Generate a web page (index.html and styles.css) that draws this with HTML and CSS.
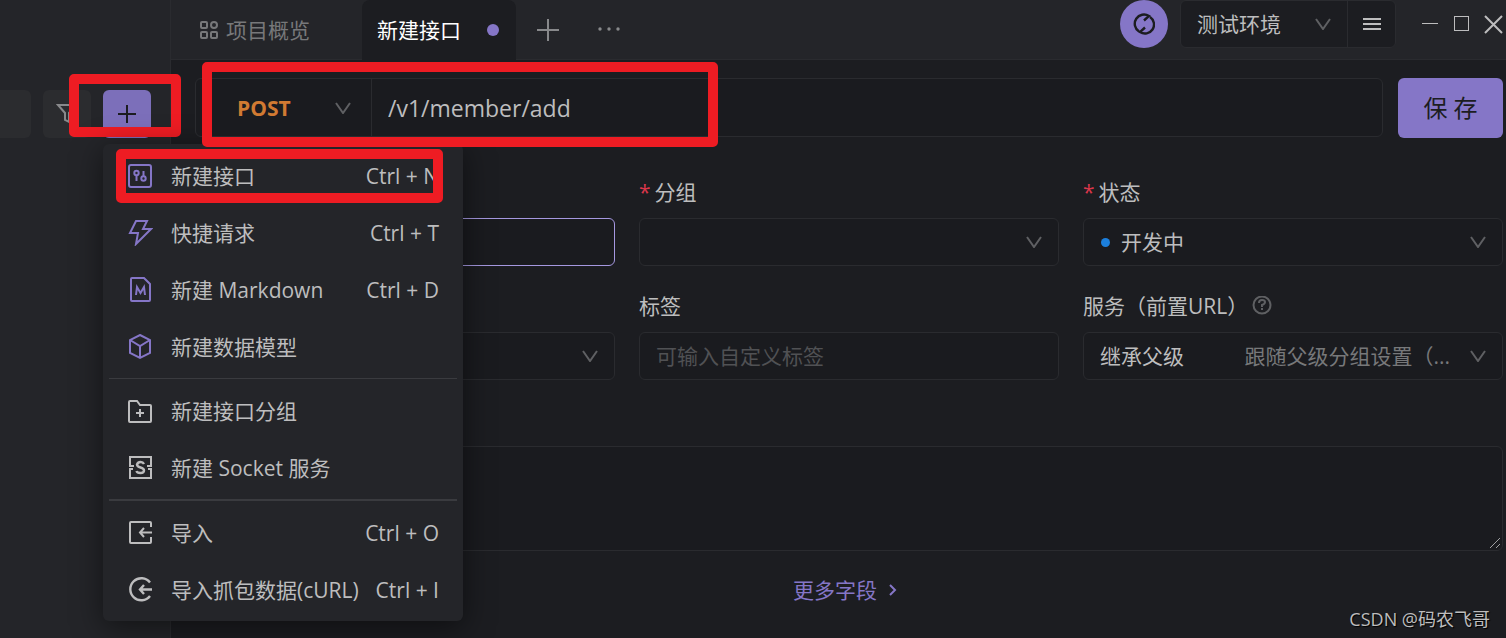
FILE: index.html
```
<!DOCTYPE html>
<html lang="zh-CN">
  <head>
    <meta charset="UTF-8">
    <meta name="viewport" content="width=device-width, initial-scale=1.0">
    <title>新建接口</title>
    <link rel="stylesheet" href="styles.css">
  </head>
  <body>
    <!-- shared icons -->
    <svg class="sprite" aria-hidden="true">
      <symbol id="chevron" viewBox="0 0 16 12"><path d="M1 1 L8 11 L15 1" /></symbol>
    </svg>

    <div class="app">
      <aside class="sidebar">
        <div class="tools">
          <input class="search" type="text" aria-label="搜索">
          <button class="tool" type="button" aria-label="筛选">
            <svg class="icon" width="22" height="22" viewBox="0 0 22 22"><path d="M2 2h18l-7 8v9l-4-2v-7z" /></svg>
          </button>
          <button class="tool add" type="button" aria-label="新建">
            <svg class="icon" width="20" height="20" viewBox="0 0 20 20"><path d="M10 1v18M1 10h18" /></svg>
          </button>
          <div class="mark markAdd"></div>
        </div>

        <!-- dropdown of the add button -->
        <div class="menu">
          <button class="item" type="button">
            <svg class="icon purple" width="26" height="26" viewBox="0 0 26 26"><rect x="2" y="2" width="22" height="22" rx="2" /><circle cx="9.5" cy="10" r="2.2" /><path d="M9.5 12v6M16.5 8v6" /><circle cx="16.5" cy="15.5" r="2.2" /></svg>
            <span>新建接口</span><kbd>Ctrl + N</kbd>
          </button>
          <button class="item" type="button">
            <svg class="icon purple" width="26" height="26" viewBox="0 0 26 26"><path d="M9 1h11l-4 8h8L9 24l2-11H3z" /></svg>
            <span>快捷请求</span><kbd>Ctrl + T</kbd>
          </button>
          <button class="item" type="button">
            <svg class="icon purple" width="26" height="26" viewBox="0 0 26 26"><path d="M5 1h12l6 6v16q0 1-1 1H5q-1 0-1-1V2q0-1 1-1z" /><path d="M9 18L10 10l3.500 6L17 10l1 8" /></svg>
            <span>新建 Markdown</span><kbd>Ctrl + D</kbd>
          </button>
          <button class="item" type="button">
            <svg class="icon purple" width="26" height="26" viewBox="0 0 26 26"><path d="M13 1l10 5v13l-10 5-10-5V6zM3 6l10 6 10-6M13 12v12" /></svg>
            <span>新建数据模型</span>
          </button>
          <hr>
          <button class="item" type="button">
            <svg class="icon" width="26" height="26" viewBox="0 0 26 26"><path d="M3 3h7l3 4h10q1 0 1 1v15q0 1-1 1H3q-1 0-1-1V4q0-1 1-1zM13 11v8M9 15h8" /></svg>
            <span>新建接口分组</span>
          </button>
          <button class="item" type="button">
            <svg class="icon" width="26" height="26" viewBox="0 0 26 26"><path d="M3 11V2h21v9M3 14v9h21v-9M2 11h5M2 14h4M20 11h5M21 14h4" /><path class="letter" d="M17 9q-1-2-3.500-2T10 9.500q0 2 3.500 3t3.500 3q0 2.500-3.500 2.500T9.500 16" /></svg>
            <span>新建 Socket 服务</span>
          </button>
          <hr class="thick">
          <button class="item" type="button">
            <svg class="icon" width="26" height="26" viewBox="0 0 26 26"><path d="M24 7V3q0-1-1-1H4Q3 2 3 3v19q0 1 1 1h19q1 0 1-1v-5M25 12.500H13M17 8l-4 4.500 4 4.500" /></svg>
            <span>导入</span><kbd>Ctrl + O</kbd>
          </button>
          <button class="item" type="button">
            <svg class="icon letter" width="26" height="26" viewBox="0 0 26 26"><path d="M23 5.500A11 11 0 1 0 23 19M25 12.500H13M17 8l-4 4.500 4 4.500" /></svg>
            <span>导入抓包数据(cURL)</span><kbd>Ctrl + I</kbd>
          </button>
          <div class="mark markItem"></div>
        </div>
      </aside>

      <main class="main">
        <header class="topbar">
          <nav class="tabs">
            <button class="tab" type="button">
              <svg class="icon" width="20" height="20" viewBox="0 0 20 20"><rect x="2" y="2" width="6" height="6" rx="1" /><circle cx="15" cy="5" r="3" /><rect x="2" y="12" width="6" height="6" rx="1" /><rect x="12" y="12" width="6" height="6" rx="1" /></svg>
              项目概览
            </button>
            <button class="tab active" type="button">新建接口<span class="dot"></span></button>
            <button class="iconBtn" type="button" aria-label="新标签">
              <svg class="icon" width="24" height="22" viewBox="0 0 24 22"><path d="M12 0v22M1 11h22" /></svg>
            </button>
            <button class="iconBtn more" type="button" aria-label="更多">
              <svg width="22" height="6" viewBox="0 0 22 6" fill="currentColor"><circle cx="2" cy="2" r="1.700" /><circle cx="11" cy="2" r="1.700" /><circle cx="20" cy="2" r="1.700" /></svg>
            </button>
          </nav>
          <div class="actions">
            <button class="sync" type="button" aria-label="同步">
              <svg class="icon letter" width="22" height="22" viewBox="0 0 22 22"><path d="M6 18.500A9 9 0 0 1 16 3L11 7.500M17 4A9 9 0 0 1 7 19L12 14.500" /></svg>
            </button>
            <div class="env">
              <div class="select">
                <select aria-label="环境"><option>测试环境</option></select>
                <svg class="chevron"><use href="#chevron" /></svg>
              </div>
              <button class="envMenu" type="button" aria-label="环境管理">
                <svg class="icon" width="18" height="14" viewBox="0 0 18 14"><path d="M0 2h18M0 7h18M0 12h18" /></svg>
              </button>
            </div>
            <div class="winBtns">
              <button type="button" aria-label="最小化"><svg width="16" height="20" viewBox="0 0 16 20"><path class="thin" d="M0 9.500h16" /></svg></button>
              <button type="button" aria-label="最大化"><svg width="16" height="20" viewBox="0 0 16 20"><rect class="thin" x="1.500" y="2.500" width="14" height="14" /></svg></button>
              <button type="button" aria-label="关闭"><svg width="20" height="20" viewBox="0 0 20 20"><path d="M1 2l17 17M18 2L1 19" /></svg></button>
            </div>
          </div>
        </header>

        <form class="form">
          <div class="urlRow">
            <div class="urlBox">
              <div class="select method">
                <select aria-label="请求方法"><option>POST</option></select>
                <svg class="chevron"><use href="#chevron" /></svg>
              </div>
              <input type="text" aria-label="接口地址" value="/v1/member/add">
            </div>
            <button class="save" type="button">保 存</button>
            <div class="mark markUrl"></div>
          </div>

          <div class="fields">
            <div class="field">
              <input class="control focused" type="text" aria-label="接口名称">
            </div>
            <div class="field">
              <label for="group"><span class="required">*</span>分组</label>
              <div class="select control">
                <select id="group"><option></option></select>
                <svg class="chevron"><use href="#chevron" /></svg>
              </div>
            </div>
            <div class="field">
              <label for="status"><span class="required">*</span>状态</label>
              <div class="select control status">
                <span class="statusDot"></span>
                <select id="status"><option>开发中</option></select>
                <svg class="chevron"><use href="#chevron" /></svg>
              </div>
            </div>
            <div class="field">
              <div class="select control">
                <select aria-label="责任人"><option></option></select>
                <svg class="chevron"><use href="#chevron" /></svg>
              </div>
            </div>
            <div class="field">
              <label for="tags">标签</label>
              <input class="control" id="tags" type="text" placeholder="可输入自定义标签">
            </div>
            <div class="field">
              <label for="service">服务（前置URL）
                <svg class="help" width="20" height="20" viewBox="0 0 20 20"><circle cx="10" cy="9" r="8.500" /><path d="M7 7q0-3 3-3t3 2q0 2-3 3v2M10 12v2" /></svg>
              </label>
              <div class="select control">
                <select id="service"><option>继承父级</option></select>
                <span class="hint">跟随父级分组设置（...</span>
                <svg class="chevron"><use href="#chevron" /></svg>
              </div>
            </div>
          </div>

          <div class="descBox">
            <textarea class="desc" aria-label="说明"></textarea>
            <svg class="grip" width="12" height="12" viewBox="0 0 12 12"><path d="M1 11L11 1M7 11l4-4" /></svg>
          </div>

          <a class="moreFields" href="#">更多字段
            <svg class="icon" width="8" height="12" viewBox="0 0 8 12"><path d="M1 1l5 5-5 5" /></svg>
          </a>
        </form>
      </main>
    </div>
    <div class="watermark">CSDN @码农飞哥</div>
  </body>
</html>
```
FILE: styles.css
```
:root {
    --bar: #242529;
    --bg: #1c1d21;
    --input: #1a1b1f;
    --line: #2a2b2f;
    --text: #bdbdbe;
    --muted: #77787a;
    --purple: #8576c7;
    --red: #ee1c23;
}
* {
    box-sizing: border-box;
}
body {
    margin: 0;
    background: var(--bg);
    color: var(--text);
    font-family: "Open Sans", "Noto Sans CJK SC", sans-serif;
    font-size: 21px;
    line-height: 30px;
}
button, input, select, textarea, kbd {
    font: inherit;
    color: inherit;
}
button {
    padding: 0;
    border: 0;
    background: none;
}
input, select, textarea {
    min-width: 0;
    border: 0;
    outline: 0;
    background: none;
}
svg {
    display: block;
    flex: none;
}
.sprite {
    position: absolute;
    width: 0;
    height: 0;
}
.icon {
    fill: none;
    stroke: currentColor;
    stroke-width: 2;
}
.letter {
    stroke-width: 2.4;
}
.purple {
    color: var(--purple);
}
.app {
    display: flex;
    min-height: 100vh;
}

/* sidebar */
.sidebar {
    position: relative;
    z-index: 2;
    flex: none;
    width: 171px;
    background: var(--bar);
    border-right: 1px solid var(--line);
}
.tools {
    position: relative;
    display: flex;
    gap: 12px;
    padding-top: 90px;
}
.search {
    width: 31px;
    height: 48px;
    background: #2b2c2f;
    border-radius: 0 6px 6px 0;
}
.tool {
    display: flex;
    align-items: center;
    justify-content: center;
    width: 48px;
    height: 48px;
    background: #2b2c2f;
    border-radius: 6px;
    color: #88898b;
}
.add {
    background: #7c6fba;
    color: #1c1d21;
}

/* red frames */
.mark {
    position: absolute;
    border: 10px solid var(--red);
    border-radius: 5px;
    pointer-events: none;
}
.markAdd {
    top: 74px;
    left: 69px;
    width: 112px;
    height: 63px;
}
.markUrl {
    top: -16px;
    left: 7px;
    width: 516px;
    height: 85px;
}
.markItem {
    top: 5px;
    left: 13px;
    width: 327px;
    height: 54px;
}

/* menu */
.menu {
    position: absolute;
    top: 144px;
    left: 103px;
    width: 360px;
    padding: 3px 6px;
    background: var(--bar);
    border-radius: 6px;
    box-shadow: 0 6px 30px rgba(0, 0, 0, 0.5);
}
.item {
    display: flex;
    align-items: center;
    width: 100%;
    height: 57px;
    padding: 0 18px;
    text-align: left;
    white-space: nowrap;
}
.item span {
    margin-left: 18px;
}
.item kbd {
    margin-left: auto;
}
.menu hr {
    height: 1px;
    margin: 3px 0;
    border: 0;
    background: #3a3b3f;
}
.menu .thick {
    height: 2px;
}

/* top bar */
.main {
    display: flex;
    flex-direction: column;
    flex: 1;
    min-width: 0;
}
.topbar {
    display: flex;
    justify-content: space-between;
    height: 60px;
    background: var(--bar);
    box-shadow: inset 0 -1px var(--line);
}
.tabs, .actions, .env, .winBtns {
    display: flex;
}
.tab {
    display: flex;
    align-items: center;
    gap: 7px;
    width: 191px;
    padding-left: 28px;
    color: var(--muted);
}
.active {
    gap: 26px;
    width: 154px;
    padding-left: 15px;
    background: var(--bg);
    border-radius: 8px 8px 0 0;
    color: #fff;
}
.dot {
    width: 12px;
    height: 12px;
    border-radius: 50%;
    background: var(--purple);
}
.iconBtn {
    margin-left: 20px;
    color: #88898b;
}
.more {
    margin-left: 38px;
}
.sync {
    display: flex;
    align-items: center;
    justify-content: center;
    width: 48px;
    height: 48px;
    margin-right: 12px;
    border-radius: 50%;
    background: var(--purple);
    color: #1c1d21;
}
.env {
    width: 216px;
    height: 48px;
    background: var(--bg);
    border: 1px solid var(--line);
    border-radius: 6px;
}
.envMenu {
    display: flex;
    align-items: center;
    justify-content: center;
    width: 48px;
    border-left: 1px solid var(--line);
}
.winBtns {
    align-items: center;
    gap: 15px;
    height: 48px;
    margin: 0 2px 0 26px;
}
.winBtns svg {
    fill: none;
    stroke: #bdbdbe;
    stroke-width: 2;
}
.winBtns .thin {
    stroke-width: 1;
}

/* selects: text, hint and chevron share one cell */
.select {
    display: grid;
    flex: 1;
    align-items: center;
}
.select > * {
    grid-area: 1 / 1;
}
.select select {
    width: 100%;
    height: 100%;
    padding: 0 16px;
    appearance: none;
}
.chevron {
    justify-self: end;
    width: 16px;
    height: 12px;
    margin-right: 16px;
    fill: none;
    stroke: #5f6063;
    stroke-width: 2;
    pointer-events: none;
}
.hint {
    justify-self: end;
    margin-right: 52px;
    color: var(--muted);
    pointer-events: none;
}

/* form */
.form {
    display: flex;
    flex-direction: column;
    padding: 18px 3px 0 24px;
}
.urlRow {
    position: relative;
    z-index: 3;
    display: flex;
    gap: 15px;
}
.urlBox {
    display: flex;
    flex: 1;
    height: 59px;
    background: var(--input);
    border: 1px solid var(--line);
    border-radius: 6px;
}
.urlBox input {
    flex: 1;
    padding: 0 16px;
    font-size: 23px;
}
.method {
    flex: none;
    width: 176px;
    border-right: 1px solid var(--line);
}
.method select {
    padding-left: 41px;
    color: #d17a32;
    font-weight: bold;
}
.method .chevron {
    margin-right: 20px;
}
.save {
    width: 105px;
    height: 60px;
    border-radius: 6px;
    background: var(--purple);
    color: #1c1d21;
    font-size: 24px;
}
.fields {
    display: grid;
    grid-template-columns: repeat(3, 1fr);
    gap: 24px;
    margin-top: 38px;
}
.field {
    display: flex;
    flex-direction: column;
    justify-content: flex-end;
    gap: 10px;
}
.field label {
    display: flex;
    align-items: center;
    height: 32px;
}
.required {
    margin-right: 4px;
    color: #d9364a;
}
.control {
    flex: none;
    width: 100%;
    height: 48px;
    background: var(--input);
    border: 1px solid var(--line);
    border-radius: 6px;
}
input.control {
    padding: 0 16px;
}
.focused {
    border-color: #a598e0;
}
::placeholder {
    color: #505154;
}
.status select {
    padding-left: 37px;
}
.statusDot {
    width: 9px;
    height: 9px;
    margin-left: 17px;
    border-radius: 50%;
    background: #1c7fdc;
}
.help {
    margin-left: 4px;
    fill: none;
    stroke: #5f6063;
    stroke-width: 2;
}
.descBox {
    display: grid;
    margin-top: 66px;
}
.desc {
    grid-area: 1 / 1;
    height: 105px;
    background: var(--input);
    border: 1px solid var(--line);
    border-radius: 6px;
    resize: none;
}
.grip {
    grid-area: 1 / 1;
    place-self: end;
    margin: 2px;
    fill: none;
    stroke: #a0a0a2;
    stroke-width: 1;
    pointer-events: none;
}
.moreFields {
    display: flex;
    align-items: center;
    align-self: center;
    gap: 12px;
    margin-top: 24px;
    padding-right: 8px;
    color: var(--purple);
    text-decoration: none;
}
.watermark {
    position: absolute;
    right: 16px;
    bottom: 4px;
    font-size: 18px;
    text-shadow: 1px 1px 1px #000;
}
```
